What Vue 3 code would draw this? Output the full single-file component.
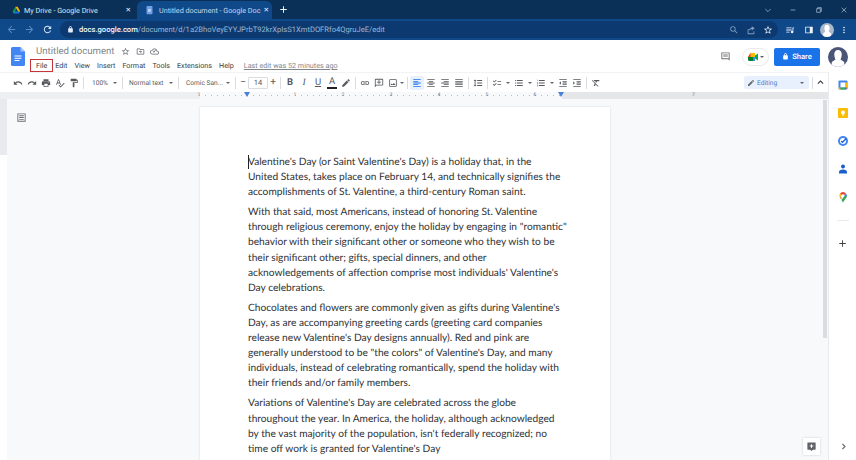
<template>
  <div class="app">
    <!-- chrome tabs -->
    <div class="tabbar">
      <div class="tab">
        <svg class="favicon" viewBox="0 0 24 24">
          <path fill="#1a73e8" d="M2 18l3.5 3h13l3.5-5H8z" />
          <path fill="#0f9d58" d="M9 3L2 16l3 5 7-13z" />
          <path fill="#f4b400" d="M9 3h6l7 13h-6z" />
        </svg>
        <span class="tab-title">My Drive - Google Drive</span>
        <span class="tab-x">✕</span>
      </div>
      <div class="tab active">
        <svg class="favicon" viewBox="0 0 24 24">
          <rect x="4" y="1" width="16" height="22" rx="2" fill="#6f9eea" />
          <path fill="#fff" d="M8 9h8v1.5H8zM8 12h8v1.5H8zM8 15h6v1.5H8z" />
        </svg>
        <span class="tab-title">Untitled document - Google Doc</span>
        <span class="tab-x">✕</span>
      </div>
      <svg class="newtab" viewBox="0 0 24 24"><path d="M19 13h-6v6h-2v-6H5v-2h6V5h2v6h6z" /></svg>
      <div class="win-btns">
        <svg viewBox="0 0 24 24"><path d="M4 9l8 8 8-8" /></svg>
        <svg viewBox="0 0 24 24"><path d="M5 12h14" /></svg>
        <svg viewBox="0 0 24 24"><path d="M5 8h11v11H5zM8 8V5h11v11h-3" /></svg>
        <svg viewBox="0 0 24 24"><path d="M5 5l14 14M19 5L5 19" /></svg>
      </div>
    </div>

    <!-- address bar -->
    <div class="addressbar">
      <svg class="nav dim" viewBox="0 0 24 24"><path :d="icons.back" /></svg>
      <svg class="nav dim" viewBox="0 0 24 24"><path :d="icons.forward" /></svg>
      <svg class="nav" viewBox="0 0 24 24"><path :d="icons.refresh" /></svg>
      <div class="omnibox">
        <svg class="lock" viewBox="0 0 24 24"><path :d="icons.lock" /></svg>
        <span class="url"><b>docs.google.com</b>/document/d/1a2BhoVeyEYYJPrbT92krXpIsS1XmtDOFRfo4QgruJeE/edit</span>
        <svg class="omni-icon" viewBox="0 0 24 24"><path :d="icons.search" /></svg>
        <svg class="omni-icon" viewBox="0 0 24 24"><path :d="icons.share" /></svg>
        <svg class="omni-icon bright" viewBox="0 0 24 24"><path :d="icons.star" /></svg>
      </div>
      <svg class="bar-icon queue" viewBox="0 0 24 24"><path :d="icons.queue" /></svg>
      <svg class="bar-icon panel" viewBox="0 0 24 24"><path :d="icons.sidebar" /></svg>
      <div class="chrome-avatar">
        <svg viewBox="0 0 24 24"><path fill="#fff" d="M12 3c3 0 4.5 2.5 4.5 5.5S15 15 15 15l4 3v6H5v-6l4-3s-1.5-3.5-1.5-6.5S9 3 12 3z" /></svg>
      </div>
      <svg class="bar-icon dots" viewBox="0 0 24 24"><path :d="icons.dots" /></svg>
    </div>

    <!-- docs header -->
    <div class="docs-header">
      <svg class="docs-logo" viewBox="0 0 14 19">
        <path fill="#4285f4" d="M1.5 0H9.5L14 4.5V17.5A1.5 1.5 0 0 1 12.5 19H1.5A1.5 1.5 0 0 1 0 17.5V1.5A1.5 1.5 0 0 1 1.5 0z" />
        <path fill="#a1c2fa" d="M9.5 0L14 4.5H9.5z" />
        <path fill="#fff" d="M3.5 8.5h7v1h-7zM3.5 10.8h7v1h-7zM3.5 13.1h5v1h-5z" />
      </svg>
      <div class="title-block">
        <div class="title-row">
          <span class="doc-title">Untitled document</span>
          <svg class="title-icon" viewBox="0 0 24 24"><path :d="icons.star" /></svg>
          <svg class="title-icon" viewBox="0 0 24 24"><path :d="icons.folder" /></svg>
          <svg class="title-icon" viewBox="0 0 24 24"><path :d="icons.cloud" /></svg>
        </div>
        <div class="menu-row">
          <span v-for="m in menus" :key="m" class="menu-item" :class="{ 'menu-file': m === 'File' }">{{ m }}</span>
          <span class="last-edit">Last edit was 52 minutes ago</span>
        </div>
      </div>
      <div class="header-right">
        <svg class="comment-icon" viewBox="0 0 24 24"><path :d="icons.comment" /></svg>
        <div class="meet">
          <svg viewBox="0 0 24 24">
            <path fill="#00832d" d="M2 12h10v8H5a3 3 0 0 1-3-3z" />
            <path fill="#fbbc04" d="M7 4h9v8H2z" />
            <path fill="#ea4335" d="M2 12l5-8v8z" />
            <path fill="#4285f4" d="M12 12h4v8h-4z" />
            <path fill="#00ac47" d="M16 9l6-4v14l-6-4z" />
          </svg>
          <i class="caret dark"></i>
        </div>
        <div class="share">
          <svg viewBox="0 0 24 24"><path :d="icons.lock" /></svg>
          <span>Share</span>
        </div>
        <div class="user-avatar">
          <svg viewBox="0 0 24 24"><path fill="#fff" d="M12 3.5c3 0 4.5 2.5 4.5 5.5s-1.5 6-1.5 6l4.5 3v6h-15v-6l4.5-3S7.5 12 7.5 9s1.5-5.5 4.5-5.500z" /></svg>
        </div>
      </div>
    </div>

    <div class="workspace">
      <div class="docs-main">
        <!-- toolbar -->
        <div class="toolbar">
          <template v-for="(t, i) in tools" :key="i">
            <span v-if="t.sep" class="sep"></span>
            <span v-else-if="t.label" class="drop" :style="{ width: t.w + 'px', paddingLeft: t.pad + 'px' }">
              <span>{{ t.label }}</span><i class="caret"></i>
            </span>
            <span v-else-if="t.size" class="size">
              <span class="size-btn">−</span><span class="size-box">14</span><span class="size-btn">+</span>
            </span>
            <span v-else-if="t.text" class="tool text-tool" :class="t.cls">{{ t.text }}</span>
            <span v-else class="tool" :class="{ on: t.on }">
              <svg viewBox="0 0 24 24"><path :d="icons[t.icon]" /></svg>
            </span>
            <i v-if="t.caret" class="caret tool-caret" :class="{ tight: t.tight }"></i>
          </template>
          <div class="toolbar-right">
            <div class="editing">
              <svg viewBox="0 0 24 24"><path :d="icons.pen" /></svg>
              <span>Editing</span>
              <i class="caret"></i>
            </div>
            <span class="sep wide"></span>
            <svg class="collapse" viewBox="0 0 24 24"><path d="M5 15l7-7 7 7" /></svg>
          </div>
        </div>

        <!-- top ruler -->
        <div class="ruler">
          <span v-for="n in rulerNums" :key="n.k" class="ruler-num">{{ n.v }}</span>
          <i class="indent-marker left"></i>
          <i class="indent-marker right"></i>
        </div>

        <div class="canvas-row">
          <div class="side-ruler"></div>
          <div class="canvas">
            <svg class="outline-icon" viewBox="0 0 24 24"><path :d="icons.outline" /></svg>
            <div class="page">
              <span class="cursor"></span>
              <p v-for="(para, i) in paragraphs" :key="i">
                <span v-for="(line, j) in para" :key="j" class="line">{{ line }}</span>
              </p>
            </div>
            <div class="explore">
              <svg viewBox="0 0 24 24"><path d="M4 3h16a1 1 0 0 1 1 1v14a1 1 0 0 1-1 1h-5l-3 3-3-3H4a1 1 0 0 1-1-1V4a1 1 0 0 1 1-1zm7 4v3H8v2h3v3h2v-3h3v-2h-3V7z" /></svg>
            </div>
          </div>
          <div class="scrollbar"><div class="thumb"></div></div>
        </div>
      </div>

      <!-- right side panel -->
      <div class="side-panel">
        <svg class="app-icon" viewBox="0 0 24 24">
          <rect x="3" y="3" width="18" height="18" rx="2" fill="#4285f4" />
          <rect x="7" y="7" width="10" height="10" fill="#fff" />
          <path fill="#fbbc04" d="M3 17h4v4H5a2 2 0 0 1-2-2z" />
          <path fill="#34a853" d="M7 17h10v4H7z" />
          <path fill="#ea4335" d="M17 17h4l-4 4z" />
          <path fill="#fbbc04" d="M17 7h4v10h-4z" />
        </svg>
        <svg class="app-icon" viewBox="0 0 24 24">
          <path fill="#fbbc04" d="M4 2h16a2 2 0 0 1 2 2v16a2 2 0 0 1-2 2H4a2 2 0 0 1-2-2V4a2 2 0 0 1 2-2z" />
          <circle cx="12" cy="11" r="4" fill="#fff" />
          <rect x="10" y="15" width="4" height="2" fill="#fff" />
        </svg>
        <svg class="app-icon" viewBox="0 0 24 24">
          <circle cx="12" cy="12" r="10" fill="#4285f4" />
          <circle cx="12" cy="12" r="6" fill="#fff" />
          <path d="M8.5 12l2.5 2.5L19 6.5" fill="none" stroke="#1a5fd0" stroke-width="2.5" />
        </svg>
        <svg class="app-icon" viewBox="0 0 24 24">
          <circle cx="12" cy="7" r="4" fill="#1a5fd0" />
          <path fill="#1a5fd0" d="M4 21v-3c0-3 3-5 8-5s8 2 8 5v3z" />
        </svg>
        <svg class="app-icon" viewBox="0 0 24 24">
          <path fill="#34a853" d="M12 23c-1-2-2-3.5-3-5l6-8 5-1c0 5-5 8-8 14z" />
          <path fill="#ea4335" d="M6 5a8 8 0 0 1 6-3 8 8 0 0 1 6 3l-3 3a4 4 0 0 0-6 0z" />
          <path fill="#4285f4" d="M18 5a8 8 0 0 1 2 5l-5 1 0-3z" />
          <path fill="#fbbc04" d="M6 5l3 3-3.5 5A8 8 0 0 1 6 5z" />
          <path fill="#ea8a35" d="M5.5 13L9 8a4 4 0 0 0 0 5l0 5c-1-2-2.5-3-3.5-5z" />
          <circle cx="12" cy="10" r="2.5" fill="#fff" />
        </svg>
        <div class="side-divider"></div>
        <svg class="side-plus" viewBox="0 0 24 24"><path d="M19 13h-6v6h-2v-6H5v-2h6V5h2v6h6z" /></svg>
        <svg class="side-chevron" viewBox="0 0 24 24"><path d="M9 5l7 7-7 7" /></svg>
      </div>
    </div>
  </div>
</template>

<script setup>
const menus = ["File", "Edit", "View", "Insert", "Format", "Tools", "Extensions", "Help"];

const icons = {
  back: "M20 11H7.83l5.59-5.59L12 4l-8 8 8 8 1.41-1.41L7.83 13H20v-2z",
  forward: "M12 4l-1.41 1.41L16.17 11H4v2h12.17l-5.58 5.59L12 20l8-8z",
  refresh: "M17.65 6.35C16.2 4.9 14.21 4 12 4c-4.42 0-7.99 3.58-7.99 8s3.57 8 7.99 8c3.73 0 6.84-2.55 7.73-6h-2.08c-.82 2.33-3.04 4-5.65 4-3.31 0-6-2.69-6-6s2.69-6 6-6c1.66 0 3.14.69 4.22 1.78L13 11h7V4l-2.35 2.35z",
  lock: "M18 8h-1V6c0-2.76-2.24-5-5-5S7 3.24 7 6v2H6c-1.1 0-2 .9-2 2v10c0 1.1.9 2 2 2h12c1.1 0 2-.9 2-2V10c0-1.1-.9-2-2-2zM9 6c0-1.66 1.34-3 3-3s3 1.34 3 3v2H9V6z",
  search: "M15.5 14h-.79l-.28-.27A6.47 6.47 0 0 0 16 9.5 6.5 6.5 0 1 0 9.5 16c1.61 0 3.09-.59 4.23-1.57l.27.28v.79l5 4.99L20.49 19l-4.99-5zm-6 0C7.01 14 5 11.99 5 9.5S7.01 5 9.5 5 14 7.01 14 9.5 11.99 14 9.5 14z",
  share: "M4 10h5v2H6v8h12v-5h2v7H4zM14 3l7 5-7 5v-3c-3 0-5 1-6 4 0-5 2-7 6-8z",
  star: "M22 9.24l-7.19-.62L12 2 9.19 8.63 2 9.24l5.46 4.73L5.82 21 12 17.27 18.18 21l-1.63-7.03L22 9.24zM12 15.4l-3.76 2.27 1-4.28-3.32-2.88 4.38-.38L12 6.1l1.71 4.04 4.38.38-3.32 2.88 1 4.28L12 15.4z",
  queue: "M3 6h13v2H3zM3 11h13v2H3zM3 16h8v2H3zM18 6h4v2h-2v9a3 3 0 1 1-2-2.8z",
  sidebar: "M3 4h18v16H3zm2 2v12h9V6z",
  dots: "M12 8a2 2 0 1 0 0-4 2 2 0 0 0 0 4zm0 2a2 2 0 1 0 0 4 2 2 0 0 0 0-4zm0 6a2 2 0 1 0 0 4 2 2 0 0 0 0-4z",
  folder: "M20 6h-8l-2-2H4c-1.1 0-2 .9-2 2v12c0 1.1.9 2 2 2h16c1.1 0 2-.9 2-2V8c0-1.1-.9-2-2-2zm0 12H4V6h5.2l2 2H20v10zM12 9l4 3.5-4 3.5v-2.5H8v-2h4z",
  cloud: "M19.35 10.04A7.49 7.49 0 0 0 12 4C9.11 4 6.6 5.64 5.35 8.04A5.994 5.994 0 0 0 0 14c0 3.31 2.69 6 6 6h13c2.76 0 5-2.24 5-5 0-2.64-2.05-4.78-4.65-4.96zM19 18H6c-2.21 0-4-1.79-4-4s1.79-4 4-4h.71C7.37 7.69 9.48 6 12 6c3.04 0 5.5 2.46 5.5 5.5v.5H19c1.66 0 3 1.34 3 3s-1.34 3-3 3zM10 15l-2.5-2.5 1.4-1.4 1.1 1.1 4-4 1.4 1.4z",
  comment: "M3 3h18v18l-3-3H3zm2 2v11h14V5zM7 7.5h10V9H7zM7 10.5h10V12H7z",
  undo: "M12.5 8c-2.65 0-5.05.99-6.9 2.6L2 7v9h9l-3.62-3.62c1.39-1.16 3.16-1.88 5.12-1.88 3.54 0 6.55 2.31 7.6 5.5l2.37-.78C21.08 11.03 17.15 8 12.5 8z",
  redo: "M18.4 10.6C16.55 8.99 14.15 8 11.5 8c-4.65 0-8.58 3.03-9.96 7.22L3.9 16c1.05-3.19 4.05-5.5 7.6-5.5 1.95 0 3.73.72 5.12 1.88L13 16h9V7l-3.6 3.6z",
  print: "M19 8H5c-1.66 0-3 1.34-3 3v6h4v4h12v-4h4v-6c0-1.66-1.34-3-3-3zm-3 11H8v-5h8v5zm3-7c-.55 0-1-.45-1-1s.45-1 1-1 1 .45 1 1-.45 1-1 1zm-1-9H6v4h12V3z",
  spell: "M12.45 16h2.09L9.43 3H7.57L2.46 16h2.09l1.12-3h5.64l1.14 3zm-6.02-5L8.5 5.48 10.57 11H6.43zm15.16.59l-8.09 8.09L9.83 16l-1.41 1.41 5.09 5.09L23 13l-1.41-1.41z",
  paint: "M18 4V3c0-.55-.45-1-1-1H5c-.55 0-1 .45-1 1v4c0 .55.45 1 1 1h12c.55 0 1-.45 1-1V6h1v4H9v11c0 .55.45 1 1 1h2c.55 0 1-.45 1-1v-9h8V4h-3z",
  pen: "M3 17.25V21h3.75L17.81 9.94l-3.75-3.75L3 17.25zM20.71 7.04c.39-.39.39-1.02 0-1.41l-2.34-2.34c-.39-.39-1.02-.39-1.41 0l-1.83 1.83 3.75 3.75 1.83-1.83z",
  link: "M3.9 12c0-1.71 1.39-3.1 3.1-3.1h4V7H7c-2.76 0-5 2.24-5 5s2.24 5 5 5h4v-1.9H7c-1.71 0-3.1-1.39-3.1-3.1zM8 13h8v-2H8v2zm9-6h-4v1.9h4c1.71 0 3.1 1.39 3.1 3.1s-1.39 3.1-3.1 3.1h-4V17h4c2.76 0 5-2.24 5-5s-2.24-5-5-5z",
  addcomment: "M20 2H4c-1.1 0-2 .9-2 2v18l4-4h14c1.1 0 2-.9 2-2V4c0-1.1-.9-2-2-2zm0 14H5.17L4 17.17V4h16v12zM11 5h2v4h4v2h-4v4h-2v-4H7V9h4z",
  image: "M19 5v14H5V5h14m0-2H5c-1.1 0-2 .9-2 2v14c0 1.1.9 2 2 2h14c1.1 0 2-.9 2-2V5c0-1.1-.9-2-2-2zm-4.86 8.86l-3 3.87L9 13.14 6 17h12l-3.86-5.14z",
  alignLeft: "M3 3h18v2H3zM3 7h12v2H3zM3 11h18v2H3zM3 15h12v2H3zM3 19h18v2H3z",
  alignCenter: "M3 3h18v2H3zM7 7h10v2H7zM3 11h18v2H3zM7 15h10v2H7zM3 19h18v2H3z",
  alignRight: "M3 3h18v2H3zM9 7h12v2H9zM3 11h18v2H3zM9 15h12v2H9zM3 19h18v2H3z",
  justify: "M3 3h18v2H3zM3 7h18v2H3zM3 11h18v2H3zM3 15h18v2H3zM3 19h18v2H3z",
  spacing: "M6 7h2.5L5 3.5 1.5 7H4v10H1.5L5 20.5 8.5 17H6V7zm4-2v2h12V5H10zm0 14h12v-2H10v2zm0-6h12v-2H10v2z",
  checklist: "M22 7h-9v2h9V7zm0 8h-9v2h9v-2zM5.54 11L2 7.46l1.41-1.41 2.12 2.12 4.24-4.24 1.41 1.41L5.54 11zm0 8L2 15.46l1.41-1.41 2.12 2.12 4.24-4.24 1.41 1.41L5.54 19z",
  bullets: "M4 10.5c-.83 0-1.5.67-1.5 1.5s.67 1.5 1.5 1.5 1.5-.67 1.5-1.5-.67-1.5-1.5-1.5zm0-6c-.83 0-1.5.67-1.5 1.5S3.17 7.5 4 7.5 5.5 6.83 5.5 6 4.83 4.5 4 4.5zm0 12c-.83 0-1.5.68-1.5 1.5s.68 1.5 1.5 1.5 1.5-.68 1.5-1.5-.67-1.5-1.5-1.5zM7 19h14v-2H7v2zm0-6h14v-2H7v2zm0-8v2h14V5H7z",
  numbered: "M2 17h2v.5H3v1h1v.5H2v1h3v-4H2v1zm1-9h1V4H2v1h1v3zm-1 3h1.8L2 13.1v.9h3v-1H3.2L5 10.9V10H2v1zm5-6v2h14V5H7zm0 14h14v-2H7v2zm0-6h14v-2H7v2z",
  indentLess: "M11 17h10v-2H11v2zm-8-5l4 4V8l-4 4zm0 9h18v-2H3v2zM3 3v2h18V3H3zm8 6h10V7H11v2zm0 4h10v-2H11v2z",
  indentMore: "M3 21h18v-2H3v2zM3 8v8l4-4-4-4zm8 9h10v-2H11v2zM3 3v2h18V3H3zm8 6h10V7H11v2zm0 4h10v-2H11v2z",
  clear: "M3.27 5L2 6.27l6.97 6.97L6.5 19h3l1.57-3.66L16.73 21 18 19.73 3.55 5.27 3.27 5zM6 5v.18L8.82 8h2.4l-.72 1.68 2.1 2.1L14.21 8H20V5H6z",
  outline: "M3 3h18v18H3zm2 2v14h14V5zM7 7h10v2H7zM7 11h10v2H7zM7 15h10v2H7z",
};

const tools = [
  { icon: "undo" }, { icon: "redo" }, { icon: "print" }, { icon: "spell" }, { icon: "paint" },
  { sep: true },
  { label: "100%", w: 34, pad: 6 },
  { sep: true },
  { label: "Normal text", w: 51, pad: 4 },
  { sep: true },
  { label: "Comic San...", w: 52, pad: 5 },
  { sep: true },
  { size: true },
  { sep: true },
  { text: "B", cls: "bold" }, { text: "I", cls: "italic" }, { text: "U", cls: "under" }, { text: "A", cls: "color" }, { icon: "pen" },
  { sep: true },
  { icon: "link" }, { icon: "addcomment" }, { icon: "image", caret: true, tight: true },
  { sep: true },
  { icon: "alignLeft", on: true }, { icon: "alignCenter" }, { icon: "alignRight" }, { icon: "justify" },
  { sep: true },
  { icon: "spacing" },
  { sep: true },
  { icon: "checklist", caret: true }, { icon: "bullets", caret: true }, { icon: "numbered", caret: true },
  { icon: "indentLess" }, { icon: "indentMore" },
  { sep: true },
  { icon: "clear" },
];

const rulerNums = ["1", "", "1", "2", "3", "4", "5", "6", "7"].map((v, k) => ({ v, k }));

const paragraphs = [
  [
    "Valentine's Day (or Saint Valentine's Day) is a holiday that, in the",
    "United States, takes place on February 14, and technically signifies the",
    "accomplishments of St. Valentine, a third-century Roman saint.",
  ],
  [
    "With that said, most Americans, instead of honoring St. Valentine",
    "through religious ceremony, enjoy the holiday by engaging in \"romantic\"",
    "behavior with their significant other or someone who they wish to be",
    "their significant other; gifts, special dinners, and other",
    "acknowledgements of affection comprise most individuals' Valentine's",
    "Day celebrations.",
  ],
  [
    "Chocolates and flowers are commonly given as gifts during Valentine's",
    "Day, as are accompanying greeting cards (greeting card companies",
    "release new Valentine's Day designs annually). Red and pink are",
    "generally understood to be \"the colors\" of Valentine's Day, and many",
    "individuals, instead of celebrating romantically, spend the holiday with",
    "their friends and/or family members.",
  ],
  [
    "Variations of Valentine's Day are celebrated across the globe",
    "throughout the year. In America, the holiday, although acknowledged",
    "by the vast majority of the population, isn't federally recognized; no",
    "time off work is granted for Valentine's Day",
  ],
];
</script>

<style scoped>
.app {
  width: 856px;
  height: 460px;
  overflow: hidden;
  display: flex;
  flex-direction: column;
  font-family: Roboto, "Liberation Sans", sans-serif;
  text-rendering: geometricPrecision;
  color: #3c4043;
  background: #fff;
}

svg {
  fill: currentColor;
  flex-shrink: 0;
}

/* tabs */
.tabbar {
  height: 19px;
  background: #0b3058;
  display: flex;
  align-items: flex-end;
  color: #dfe7f0;
  font-size: 7.2px;
}
.tab {
  width: 137px;
  height: 18px;
  display: flex;
  align-items: center;
  padding: 0 5px 0 12px;
  box-sizing: border-box;
  gap: 3px;
}
.tab.active {
  width: 135px;
  padding-left: 8px;
  background: #10498a;
  border-radius: 6px 6px 0 0;
  color: #c9d8ea;
}
.favicon {
  width: 9px;
  height: 10px;
}
.tab.active .tab-title {
  margin-left: 2px;
}
.tab-title {
  flex: 1;
  white-space: nowrap;
}
.tab-x {
  font-size: 6.5px;
  color: #fff;
  margin-right: 1px;
}
.newtab {
  width: 11px;
  height: 11px;
  margin: 0 0 4px 6px;
  color: #fff;
}
.win-btns {
  margin-left: auto;
  display: flex;
  align-self: center;
  gap: 17.5px;
  padding-right: 8px;
}
.win-btns svg {
  width: 8px;
  height: 8px;
  fill: none;
  stroke: #a9bacd;
  stroke-width: 2.2;
}

/* address bar */
.addressbar {
  height: 21px;
  background: #10498a;
  display: flex;
  align-items: center;
  padding-left: 6px;
  box-sizing: border-box;
  color: #dbe6f3;
}
.nav {
  width: 11px;
  height: 11px;
  margin-right: 7px;
}
.nav.dim {
  color: #5a8bc4;
}
.omnibox {
  flex: 0 0 718px;
  height: 17px;
  background: #0c3a70;
  border-radius: 9px;
  display: flex;
  align-items: center;
  padding: 0 5px 0 7px;
  box-sizing: border-box;
  color: #9db6d4;
  font-size: 7.6px;
  white-space: nowrap;
}
.lock {
  width: 7px;
  height: 7px;
  margin-right: 5px;
  color: #e5edf6;
}
.url b {
  font-weight: 500;
  color: #f2f6fb;
}
.url {
  flex: 1;
}
.omni-icon {
  width: 10px;
  height: 10px;
  margin-left: 7px;
  color: #7f9dc0;
}
.omni-icon.bright {
  color: #e6eef7;
}
.bar-icon {
  width: 10px;
  height: 10px;
  color: #eef3f9;
}
.bar-icon.queue {
  margin-left: 7px;
}
.bar-icon.panel {
  margin-left: 9px;
}
.bar-icon.dots {
  margin-left: 5px;
}
.chrome-avatar {
  width: 14px;
  height: 14px;
  margin-left: 6px;
  border-radius: 50%;
  background: #a9b8cb;
  overflow: hidden;
}
.chrome-avatar svg {
  width: 14px;
  height: 14px;
  display: block;
}

/* docs header */
.docs-header {
  height: 32px;
  display: flex;
  background: #fff;
}
.docs-logo {
  width: 14px;
  height: 19px;
  margin: 7px 11px 0 11px;
}
.title-block {
  display: flex;
  flex-direction: column;
}
.title-row {
  display: flex;
  align-items: center;
  height: 19px;
  padding-top: 3px;
  box-sizing: border-box;
}
.doc-title {
  font-size: 9.6px;
  color: #80868b;
  width: 85px;
  white-space: nowrap;
}
.title-icon {
  width: 9px;
  height: 9px;
  margin-right: 5.5px;
  color: #5f6368;
}
.menu-row {
  display: flex;
  align-items: center;
  font-size: 7.2px;
  height: 13px;
  color: #3c4043;
  white-space: nowrap;
}
.menu-item {
  margin-right: 7px;
}
.menu-file {
  outline: 1.5px solid #c5343a;
  padding: 1px 5px;
  margin: 0 3px 0 -5px;
}
.last-edit {
  margin-left: 3px;
  color: #80868b;
  text-decoration: underline;
}
.header-right {
  margin-left: auto;
  display: flex;
  align-items: center;
  padding-right: 8px;
  margin-top: 1px;
}
.comment-icon {
  width: 11px;
  height: 11px;
  margin-right: 11px;
  color: #6b6f73;
}
.meet {
  width: 27px;
  height: 18px;
  border: 1px solid #e8eaed;
  border-radius: 10px;
  box-sizing: border-box;
  display: flex;
  align-items: center;
  gap: 1px;
  padding-left: 4px;
  margin-right: 5px;
}
.meet svg {
  width: 12px;
  height: 12px;
}
.share {
  width: 46px;
  height: 18px;
  background: #1a73e8;
  border-radius: 2px;
  display: flex;
  align-items: center;
  justify-content: center;
  gap: 3px;
  color: #fff;
  font-size: 7.6px;
  font-weight: 500;
  margin-right: 8px;
}
.share svg {
  width: 7px;
  height: 7px;
}
.user-avatar {
  width: 20px;
  height: 20px;
  border-radius: 50%;
  background: #4a5578;
  overflow: hidden;
}
.user-avatar svg {
  display: block;
  width: 20px;
  height: 20px;
}

/* workspace */
.workspace {
  flex: 1;
  display: flex;
  min-height: 0;
}
.docs-main {
  flex: 1;
  min-width: 0;
  display: flex;
  flex-direction: column;
}

/* toolbar */
.toolbar {
  height: 20px;
  display: flex;
  align-items: center;
  padding-left: 11px;
  color: #55585c;
  font-size: 6.6px;
  white-space: nowrap;
  border-top: 1px solid #f1f3f4;
  box-sizing: border-box;
}
.tool {
  width: 14px;
  height: 14px;
  display: flex;
  align-items: center;
  justify-content: center;
  border-radius: 2px;
  flex-shrink: 0;
}
.tool svg {
  width: 10px;
  height: 10px;
}
.tool.on {
  background: #e8f0fe;
  color: #1a73e8;
}
.text-tool {
  font-size: 9.5px;
  font-family: "Liberation Serif", serif;
}
.text-tool.bold {
  font-family: Roboto, sans-serif;
  font-weight: 700;
}
.text-tool.italic {
  font-style: italic;
}
.text-tool.under {
  text-decoration: underline;
  font-family: Roboto, sans-serif;
}
.text-tool.color {
  font-family: Roboto, sans-serif;
  border-bottom: 2px solid #222;
  border-radius: 0;
  height: 11px;
  width: 10px;
  margin: 0 2px;
  line-height: 1;
}
.sep {
  width: 1px;
  height: 12px;
  background: #dadce0;
  margin: 0 2px;
  flex-shrink: 0;
}
.sep.wide {
  margin: 0 3px;
}
.drop {
  display: flex;
  align-items: center;
  justify-content: space-between;
  padding-right: 3px;
  box-sizing: border-box;
}
.caret {
  width: 0;
  height: 0;
  border-left: 2.5px solid transparent;
  border-right: 2.5px solid transparent;
  border-top: 2.5px solid #5f6368;
  flex-shrink: 0;
}
.tool-caret {
  margin: 0 2px;
}
.tool-caret.tight {
  margin: 0 1px 0 0;
}
.size {
  display: flex;
  align-items: center;
  font-size: 7.5px;
}
.size-btn {
  width: 10px;
  text-align: center;
  font-size: 10px;
}
.size-box {
  width: 20px;
  height: 12px;
  line-height: 10px;
  text-align: center;
  border: 1px solid #dadce0;
  border-radius: 1px;
  box-sizing: border-box;
}
.toolbar-right {
  margin-left: auto;
  display: flex;
  align-items: center;
  padding-right: 3px;
}
.editing {
  width: 65px;
  height: 13px;
  background: #e8f0fe;
  border-radius: 2px;
  display: flex;
  align-items: center;
  padding: 0 4px 0 3px;
  box-sizing: border-box;
  color: #4a7fce;
  gap: 2px;
}
.editing svg {
  width: 8px;
  height: 8px;
  color: #5f6368;
}
.editing .caret {
  margin-left: auto;
  margin-right: 1px;
}
.collapse {
  width: 9px;
  height: 9px;
  fill: none;
  stroke: #3c4043;
  stroke-width: 3;
}

/* rulers */
.ruler {
  height: 7px;
  flex-shrink: 0;
  position: relative;
  display: grid;
  grid-template-columns: 175px repeat(8, 48px) 1fr;
  background:
    repeating-linear-gradient(to right, #b5b8bc 0 1px, transparent 1px 6px) 199px 3px / 363px 1px no-repeat,
    linear-gradient(to right, #edeff1 200px, #f8f9fa 200px, #f8f9fa 562px, #e4e6e8 562px);
  font-size: 5px;
  line-height: 7px;
  color: #70757a;
}
.ruler-num {
  text-align: center;
}
.ruler-num:first-child {
  grid-column: 2;
}
.indent-marker {
  position: absolute;
  top: 0;
  width: 0;
  height: 0;
  border-left: 3.5px solid transparent;
  border-right: 3.5px solid transparent;
  border-top: 5px solid #4a80dc;
}
.indent-marker.left {
  left: 244px;
}
.indent-marker.right {
  left: 558px;
}
.canvas-row {
  flex: 1;
  display: flex;
  min-height: 0;
}
.side-ruler {
  width: 7px;
  flex-shrink: 0;
  background: linear-gradient(to bottom, #e8eaed 56px, #fff 56px);
}
.canvas {
  flex: 1;
  min-width: 0;
  background: #f8f9fa;
  display: flex;
  justify-content: center;
  position: relative;
  padding-top: 8px;
  padding-right: 20px;
}
.outline-icon {
  position: absolute;
  left: 9px;
  top: 13px;
  width: 11px;
  height: 11px;
  color: #6b6f73;
}
.page {
  width: 410px;
  height: 500px;
  flex-shrink: 0;
  background: #fff;
  box-shadow: 0 0 2px rgba(60, 64, 67, 0.18);
  box-sizing: border-box;
  padding: 48px 0 0 48px;
  position: relative;
  font-family: Lato, "Open Sans", sans-serif;
  font-size: 10.2px;
  line-height: 15.1px;
  color: #2f3134;
}
.page p {
  margin: 0 0 5px;
}
.line {
  display: block;
  white-space: nowrap;
}
.cursor {
  position: absolute;
  left: 48px;
  top: 48px;
  width: 1px;
  height: 14px;
  background: #222;
}
.explore {
  position: absolute;
  right: 3px;
  bottom: 5px;
  width: 17px;
  height: 17px;
  background: #fff;
  box-shadow: 0 0 2px rgba(60, 64, 67, 0.25);
  display: flex;
  align-items: center;
  justify-content: center;
}
.explore svg {
  width: 11px;
  height: 11px;
  color: #5f6368;
}
.scrollbar {
  width: 5px;
  flex-shrink: 0;
  background: #f8f9fa;
  padding: 1px 1px 0 0;
  box-sizing: border-box;
}
.thumb {
  height: 238px;
  background: #dadce0;
}

/* side panel */
.side-panel {
  width: 28px;
  flex-shrink: 0;
  background: #fff;
  border-left: 1px solid #e8eaed;
  box-sizing: border-box;
  display: flex;
  flex-direction: column;
  align-items: center;
  padding-top: 7px;
  position: relative;
}
.app-icon {
  width: 12px;
  height: 12px;
  margin-bottom: 16px;
}
.side-divider {
  width: 12px;
  height: 1px;
  background: #e8eaed;
  margin: 1px 0 17px;
}
.side-plus {
  width: 11px;
  height: 11px;
  color: #3c4043;
}
.side-chevron {
  position: absolute;
  left: 10px;
  bottom: 9px;
  width: 9px;
  height: 9px;
  fill: none;
  stroke: #5f6368;
  stroke-width: 3;
}
</style>
